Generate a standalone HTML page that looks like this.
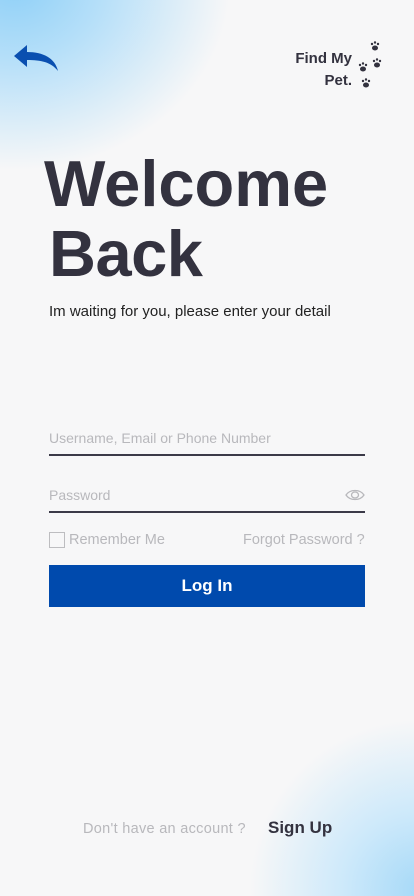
<!DOCTYPE html>
<html><head><meta charset="utf-8"><style>
*{margin:0;padding:0;box-sizing:border-box}
html,body{width:414px;height:896px;overflow:hidden;background:#f7f7f8}
.wrap{position:relative;width:414px;height:896px;overflow:hidden;font-family:"Liberation Sans",sans-serif;color:#33323f;background:#f7f7f8}
.g1{position:absolute;left:-200px;top:-200px;width:430px;height:370px;border-radius:50%;background:radial-gradient(closest-side,#8fd0f7 0%,#b5dff9 40%,rgba(247,247,248,0) 100%)}
.g2{position:absolute;left:250px;top:720px;width:340px;height:340px;border-radius:50%;background:radial-gradient(closest-side,#a6d9f8 0%,#cde9fa 45%,rgba(247,247,248,0) 100%)}
.abs{position:absolute}
h1{position:absolute;font-size:65px;line-height:68px;font-weight:bold;letter-spacing:-0.5px;color:#33323f}
.sub{left:49px;top:303px;font-size:15px;color:#222}
.inp{position:absolute;left:49px;width:316px;border-bottom:2px solid #3b3a48;font-size:14px;color:#b8b8bc;padding-bottom:8px}
.btn{position:absolute;left:49px;top:565px;width:316px;height:42px;background:#004aad;color:#fff;font-weight:bold;font-size:17px;text-align:center;line-height:42px}
</style></head><body><div class="wrap">
<div class="g1"></div><div class="g2"></div>
<svg class="abs" style="left:13px;top:44px" width="46" height="28" viewBox="0 0 46 28"><path d="M1 12 L14 1 L14 8 C30 8 42 14 45 27 C38 18 28 16 14 16 L14 23 Z" fill="#0a4fb0"/></svg>
<div class="abs" style="left:288px;top:48px;font-weight:bold;font-size:15px;line-height:22px;text-align:right;width:64px">Find My<br>Pet.</div>
<svg class="abs" style="left:356px;top:40px" width="30" height="50" viewBox="0 0 30 50"><g fill="#33323f">
<g transform="translate(19,6)"><ellipse cx="0" cy="2" rx="3" ry="2.5"/><circle cx="-3" cy="-2" r="1.2"/><circle cx="0" cy="-3.5" r="1.2"/><circle cx="3" cy="-2" r="1.2"/></g>
<g transform="translate(7,27)"><ellipse cx="0" cy="2" rx="3" ry="2.5"/><circle cx="-3" cy="-2" r="1.2"/><circle cx="0" cy="-3.5" r="1.2"/><circle cx="3" cy="-2" r="1.2"/></g>
<g transform="translate(21,23)"><ellipse cx="0" cy="2" rx="3" ry="2.5"/><circle cx="-3" cy="-2" r="1.2"/><circle cx="0" cy="-3.5" r="1.2"/><circle cx="3" cy="-2" r="1.2"/></g>
<g transform="translate(10,43)"><ellipse cx="0" cy="2" rx="3" ry="2.5"/><circle cx="-3" cy="-2" r="1.2"/><circle cx="0" cy="-3.5" r="1.2"/><circle cx="3" cy="-2" r="1.2"/></g>
</g></svg>
<h1 style="left:44px;top:150px;letter-spacing:0px">Welcome</h1>
<h1 style="left:49px;top:220px">Back</h1>
<div class="abs sub">Im waiting for you, please enter your detail</div>
<div class="inp" style="top:430px">Username, Email or Phone Number</div>
<div class="inp" style="top:487px">Password</div>
<svg class="abs" style="left:345px;top:489px" width="20" height="12" viewBox="0 0 20 12"><path d="M1 6 C5 0 15 0 19 6 C15 12 5 12 1 6 Z" fill="none" stroke="#b8b8bc" stroke-width="1.3"/><ellipse cx="10" cy="6" rx="3.5" ry="3" fill="none" stroke="#b8b8bc" stroke-width="1.3"/></svg>
<div class="abs" style="left:49px;top:532px;width:16px;height:16px;border:1.5px solid #bdbdc0"></div>
<div class="abs" style="left:69px;top:532px;font-size:14.5px;color:#b8b8bc">Remember Me</div>
<div class="abs" style="left:243px;top:532px;font-size:14.5px;color:#b8b8bc">Forgot Password ?</div>
<div class="btn">Log In</div>
<div class="abs" style="left:83px;top:821px;font-size:14.5px;color:#b8b8bc;letter-spacing:0.3px">Don't have an account ?</div>
<div class="abs" style="left:268px;top:818px;font-size:17px;font-weight:bold">Sign Up</div>
</div></body></html>
